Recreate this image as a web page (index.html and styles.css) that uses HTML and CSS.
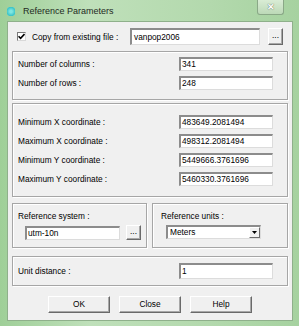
FILE: index.html
```html
<!DOCTYPE html>
<html lang="en">
<head>
    <meta charset="UTF-8">
    <title>Reference Parameters</title>
    <link rel="stylesheet" href="styles.css">
</head>
<body>
    <div class="window">
        <div class="titlebar">
            <span class="app-icon"></span>
            <span class="title">Reference Parameters</span>
            <span class="close-btn">&#x2715;</span>
        </div>

        <div class="client">
            <div class="file-row">
                <div class="check">
                    <span class="checkbox">
                        <svg width="7" height="7" viewBox="0 0 7 7"><path d="M0.5 3.2 L2.6 5.4 L6.5 1" fill="none" stroke="#000" stroke-width="1.6"/></svg>
                    </span>
                    <span>Copy from existing file :</span>
                </div>
                <div class="field file-field">vanpop2006</div>
                <div class="btn browse">...</div>
            </div>

            <div class="group grid-group size-group">
                <span>Number of columns :</span>
                <div class="field">341</div>
                <span>Number of rows :</span>
                <div class="field">248</div>
            </div>

            <div class="group grid-group coord-group">
                <span>Minimum X coordinate :</span>
                <div class="field">483649.2081494</div>
                <span>Maximum X coordinate :</span>
                <div class="field">498312.2081494</div>
                <span>Minimum Y coordinate :</span>
                <div class="field">5449666.3761696</div>
                <span>Maximum Y coordinate :</span>
                <div class="field">5460330.3761696</div>
            </div>

            <div class="ref-row">
                <div class="group ref-system">
                    <div class="group-label">Reference system :</div>
                    <div class="ref-line">
                        <div class="field ref-field">utm-10n</div>
                        <div class="btn browse small">...</div>
                    </div>
                </div>
                <div class="group ref-units">
                    <div class="group-label">Reference units :</div>
                    <div class="field select">
                        <span>Meters</span>
                        <span class="drop-btn">
                            <svg width="5" height="3" viewBox="0 0 5 3"><path d="M0 0 H5 L2.5 3 Z" fill="#000"/></svg>
                        </span>
                    </div>
                </div>
            </div>

            <div class="group grid-group unit-group">
                <span>Unit distance :</span>
                <div class="field tall">1</div>
            </div>

            <div class="button-row">
                <div class="btn action">OK</div>
                <div class="btn action">Close</div>
                <div class="btn action">Help</div>
            </div>
        </div>
    </div>
</body>
</html>
```

FILE: styles.css
```css
* {
    box-sizing: border-box;
    margin: 0;
    padding: 0;
}

body {
    background-color: #a9d4a3;
    font-family: 'Liberation Sans', Arial, sans-serif;
    font-size: 8.3px;
    color: #000;
}

.window {
    width: 299px;
    height: 326px;
    padding: 0 7px 6px 8px;
    display: flex;
    flex-direction: column;
    background: linear-gradient(to right, #9fcf98, #bfe0ba 30%, #b3d9ad 70%, #a6d2a0);
}

.titlebar {
    height: 22px;
    display: flex;
    align-items: center;
    position: relative;
}

.app-icon {
    width: 8px;
    height: 9px;
    margin-left: -1px;
    background: radial-gradient(circle, #7fe6e0 20%, #3cc4c8 70%, #b6dcb0 100%);
    border-radius: 2px;
}

.title {
    margin-left: 8px;
    font-size: 9px;
    color: #1e2a1e;
    line-height: 1;
}

.close-btn {
    position: absolute;
    right: 8px;
    top: 0;
    width: 27px;
    height: 15px;
    border: 1px solid #8aa887;
    border-top: none;
    border-radius: 0 0 3px 3px;
    background: linear-gradient(#d9ecd5, #bcd9b7);
    color: #fff;
    font-size: 9px;
    font-weight: bold;
    text-align: center;
    line-height: 14px;
    text-shadow: 0 0 1px #6b7d69, 0 0 1px #6b7d69;
}

.client {
    flex: 1;
    background-color: #f0f0f0;
    box-shadow: 0 0 0 1px #8fb08b;
    padding: 6px 4px 0 4px;
    display: flex;
    flex-direction: column;
}

/* sunken edit box */
.field {
    height: 14px;
    background-color: #fff;
    border-top: 2px solid #8c8c8c;
    border-left: 2px solid #8c8c8c;
    border-right: 1px solid #dcdcdc;
    border-bottom: 1px solid #dcdcdc;
    padding-left: 1px;
    line-height: 11px;
    white-space: nowrap;
    overflow: hidden;
}

/* raised push button */
.btn {
    background-color: #f0f0f0;
    border-top: 1px solid #fff;
    border-left: 1px solid #fff;
    border-right: 1px solid #6a6a6a;
    border-bottom: 1px solid #6a6a6a;
    box-shadow: inset -1px -1px 0 #a8a8a8;
    text-align: center;
}

.file-row {
    height: 17px;
    display: flex;
    align-items: center;
}

.check {
    width: 118px;
    padding-left: 5px;
    display: flex;
    align-items: center;
    gap: 6px;
}

.checkbox {
    width: 9px;
    height: 9px;
    background-color: #fff;
    border-top: 1px solid #7a7a7a;
    border-left: 1px solid #7a7a7a;
    border-right: 1px solid #d8d8d8;
    border-bottom: 1px solid #d8d8d8;
    display: flex;
    align-items: center;
    justify-content: center;
}

.file-field {
    width: 130px;
    height: 17px;
    line-height: 14px;
    padding-left: 2px;
}

.browse {
    margin-left: 8px;
    width: 15px;
    height: 17px;
    line-height: 12px;
}

.browse.small {
    margin-left: 6px;
    height: 15px;
    line-height: 10px;
}

/* etched group frame */
.group {
    border: 1px solid #a6a6a6;
    box-shadow: inset 1px 1px 0 #fff, 1px 1px 0 #fff;
}

.grid-group {
    display: grid;
    grid-template-columns: 1fr 94px;
    align-items: center;
    row-gap: 5px;
    padding: 5px 14px 9px 5px;
}

.size-group {
    margin-top: 6px;
}

.coord-group {
    margin-top: 3px;
    padding-top: 11px;
    padding-bottom: 10px;
}

.ref-row {
    margin-top: 6px;
    display: grid;
    grid-template-columns: 135px 1fr;
    gap: 5px;
}

.ref-system,
.ref-units {
    padding: 6px 5px 7px 5px;
}

.ref-units {
    padding-left: 8px;
}

.group-label {
    height: 13px;
    line-height: 13px;
}

.ref-line {
    margin-top: 2px;
    margin-left: 7px;
    display: flex;
    align-items: center;
}

.ref-field {
    width: 95px;
}

.select {
    margin-top: 2px;
    margin-left: 5px;
    width: 95px;
    display: flex;
    justify-content: space-between;
    align-items: center;
    padding-left: 2px;
}

.drop-btn {
    width: 11px;
    height: 11px;
    background-color: #f0f0f0;
    border-top: 1px solid #fff;
    border-left: 1px solid #fff;
    border-right: 1px solid #6a6a6a;
    border-bottom: 1px solid #6a6a6a;
    display: flex;
    align-items: center;
    justify-content: center;
}

.unit-group {
    margin-top: 8px;
    padding-top: 6px;
    padding-bottom: 6px;
}

.field.tall {
    height: 16px;
    line-height: 13px;
}

.button-row {
    margin-top: 10px;
    display: flex;
    justify-content: center;
    gap: 9px;
}

.action {
    width: 62px;
    height: 17px;
    line-height: 15px;
}
```
